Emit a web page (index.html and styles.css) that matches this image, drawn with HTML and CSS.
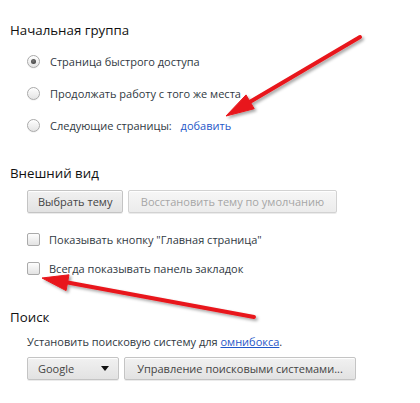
FILE: index.html
```html
<!DOCTYPE html>
<html lang="ru">
<head>
<meta charset="utf-8">
<link rel="stylesheet" href="styles.css">
</head>
<body>
<div class="page">
  <section class="section s1">
    <h3 class="heading">Начальная группа</h3>
    <div class="option">
      <span class="radio checked"></span>
      <span class="label">Страница быстрого доступа</span>
    </div>
    <div class="option">
      <span class="radio"></span>
      <span class="label">Продолжать работу с того же места</span>
    </div>
    <div class="option">
      <span class="radio"></span>
      <span class="label">Следующие страницы: <a class="link">добавить</a></span>
    </div>
  </section>

  <section class="section s2">
    <h3 class="heading">Внешний вид</h3>
    <div class="btnrow">
      <button class="btn">Выбрать тему</button>
      <button class="btn disabled">Восстановить тему по умолчанию</button>
    </div>
    <div class="checks">
      <div class="check-row">
        <span class="checkbox"></span>
        <span class="label">Показывать кнопку "Главная страница"</span>
      </div>
      <div class="check-row">
        <span class="checkbox"></span>
        <span class="label">Всегда показывать панель закладок</span>
      </div>
    </div>
  </section>

  <section class="section s3">
    <h3 class="heading">Поиск</h3>
    <div class="desc">Установить поисковую систему для <a class="link underline">омнибокса</a>.</div>
    <div class="btnrow">
      <div class="select">Google<span class="caret"></span></div>
      <button class="btn">Управление поисковыми системами...</button>
    </div>
  </section>

  <svg class="arrows" width="420" height="403" viewBox="0 0 420 403">
    <defs>
      <filter id="sh" x="-20%" y="-20%" width="140%" height="140%">
        <feDropShadow dx="2" dy="2" stdDeviation="1.5" flood-color="#000" flood-opacity="0.35"/>
      </filter>
    </defs>
    <g filter="url(#sh)" fill="#e8171b" stroke="#e8171b">
      <line x1="248" y1="103" x2="360" y2="37" stroke-width="4" stroke-linecap="round"/>
      <polygon points="226,116 254.2,108.7 246,94.9" stroke-width="1" stroke-linejoin="round"/>
      <line x1="65" y1="282" x2="254" y2="317" stroke-width="4" stroke-linecap="round"/>
      <polygon points="42,278 66.1,290.6 69,274.8" stroke-width="1" stroke-linejoin="round"/>
    </g>
  </svg>
</div>
</body>
</html>
```

FILE: styles.css
```css
html, body {
  margin: 0;
  padding: 0;
  background: #fff;
}

.page {
  position: relative;
  width: 420px;
  height: 403px;
  overflow: hidden;
  font-family: "Open Sans", "Noto Sans", sans-serif;
  font-size: 11px;
  color: #303942;
}

.section {
  display: flex;
  flex-direction: column;
  padding-left: 10px;
}

.s1 { padding-top: 20px; }
.s2 { padding-top: 22px; }
.s3 { padding-top: 24px; }

.heading {
  margin: 0;
  height: 20px;
  line-height: 20px;
  font-size: 13.3px;
  font-weight: normal;
  color: #111;
}

.s1 .heading { margin-bottom: 5px; }
.s2 .heading { margin-bottom: 7px; }
.s3 .heading { margin-bottom: 6px; }

.option {
  display: flex;
  align-items: center;
  height: 32px;
  padding-left: 17px;
}

.radio {
  width: 13px;
  height: 13px;
  border-radius: 50%;
  box-sizing: border-box;
  border: 1px solid #a9a9a9;
  background: linear-gradient(#fdfdfd, #e4e4e4);
  box-shadow: inset 0 1px 1px #fff, 0 1px 0 rgba(0,0,0,0.04);
  margin-right: 10px;
  position: relative;
  flex: none;
}

.radio.checked::after {
  content: "";
  position: absolute;
  left: 3px;
  top: 3px;
  width: 5px;
  height: 5px;
  border-radius: 50%;
  background: radial-gradient(circle at 45% 40%, #777, #333);
}

.label {
  white-space: nowrap;
}

.link {
  color: #1f57c8;
  text-decoration: none;
  margin-left: 6px;
}

.link.underline {
  text-decoration: underline;
  margin-left: 0;
}

.btnrow {
  display: flex;
  gap: 5px;
  padding-left: 17px;
}

.btn, .select {
  height: 23px;
  box-sizing: border-box;
  border: 1px solid #c4c4c4;
  border-radius: 2px;
  background: linear-gradient(#f1f1f1, #e2e2e2);
  box-shadow: 0 1px 0 rgba(0,0,0,0.08), inset 0 1px 1px #fff;
  font-family: inherit;
  font-size: 11px;
  color: #444;
  padding: 0 10px;
  line-height: 21px;
  white-space: nowrap;
}

.btn.disabled {
  color: #a6a6a6;
  background: linear-gradient(#f6f6f6, #ececec);
  border-color: #d2d2d2;
}

.s2 .btn:first-child { width: 96px; }
.s2 .btn.disabled { width: 209px; }

.checks {
  display: flex;
  flex-direction: column;
  margin-top: 12px;
}

.check-row {
  display: flex;
  align-items: center;
  height: 29px;
  padding-left: 17px;
}

.checkbox {
  width: 13px;
  height: 13px;
  box-sizing: border-box;
  border: 1px solid #aaa;
  border-radius: 2px;
  background: linear-gradient(#fdfdfd, #e3e3e3);
  margin-right: 9px;
  flex: none;
}

.desc {
  height: 18px;
  line-height: 18px;
  padding-left: 17px;
  margin-bottom: 6px;
  white-space: nowrap;
}

.select {
  width: 92px;
  display: flex;
  align-items: center;
  justify-content: space-between;
  padding: 0 9px 0 10px;
}

.caret {
  width: 0;
  height: 0;
  border-left: 4px solid transparent;
  border-right: 4px solid transparent;
  border-top: 5px solid #111;
}

.s3 .btn { width: 232px; padding: 0 8px; }

.arrows {
  position: absolute;
  left: 0;
  top: 0;
  pointer-events: none;
}
```
